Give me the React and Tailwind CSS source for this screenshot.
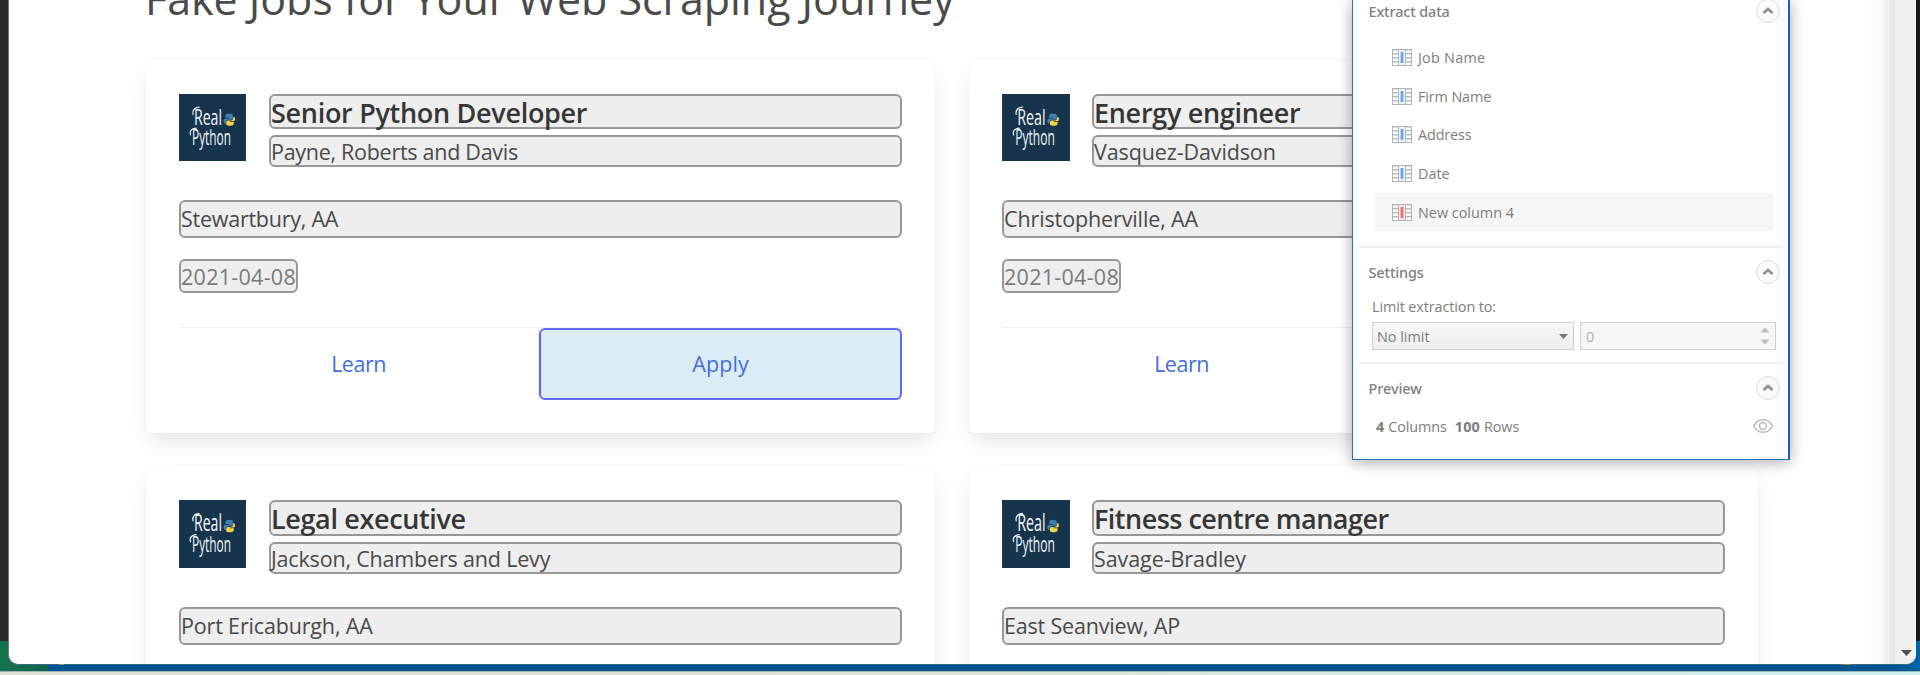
const jobs = [
  {
    title: "Senior Python Developer",
    titleTrack: "tracking-[-0.3px]",
    firm: "Payne, Roberts and Davis",
    firmTrack: "tracking-[-0.28px]",
    place: "Stewartbury, AA",
    placeTrack: "tracking-[-0.25px]",
    applySelected: true,
  },
  {
    title: "Energy engineer",
    titleTrack: "tracking-[-0.3px]",
    firm: "Vasquez-Davidson",
    firmTrack: "tracking-[-0.12px]",
    place: "Christopherville, AA",
    placeTrack: "tracking-[-0.12px]",
    applySelected: true,
  },
  {
    title: "Legal executive",
    titleTrack: "tracking-[-0.36px]",
    firm: "Jackson, Chambers and Levy",
    firmTrack: "tracking-[-0.18px]",
    place: "Port Ericaburgh, AA",
    placeTrack: "tracking-[-0.16px]",
  },
  {
    title: "Fitness centre manager",
    titleTrack: "tracking-[-0.52px]",
    firm: "Savage-Bradley",
    firmTrack: "tracking-[-0.08px]",
    place: "East Seanview, AP",
    placeTrack: "tracking-[-0.18px]",
  },
];

const columns = [
  { name: "Job Name", track: "tracking-[0.25px]" },
  { name: "Firm Name", track: "tracking-[-0.12px]" },
  { name: "Address", track: "tracking-[-0.12px]" },
  { name: "Date", track: "tracking-normal" },
  { name: "New column 4", track: "tracking-normal", active: true },
];

function Logo() {
  return (
    <svg viewBox="0 0 67 67" preserveAspectRatio="none" className="block h-full w-full" role="img">
      <rect width="67" height="67" fill="#16344c" />
      <g fill="#f4f7f9" fontFamily="'Open Sans', 'Liberation Sans', sans-serif">
        <text x="15" y="31" fontSize="22.5" textLength="28" lengthAdjust="spacingAndGlyphs">
          Real
        </text>
        <text x="13" y="51" fontSize="22" textLength="39" lengthAdjust="spacingAndGlyphs">
          Python
        </text>
      </g>
      <g fill="none" stroke="#f4f7f9" strokeWidth="1.2" strokeLinecap="round">
        <path d="M14 20.500C13 16 16 13.500 20 13.200" />
        <path d="M11.500 41C10 37 13 34.500 17 34.200" />
      </g>
      <path
        fill="#3d7fae"
        d="M50 19.500c-2.700 0-3.600 1-3.600 2.500v1.700h4v.7h-4.200c-1.200 0-1.700 1.300-1.600 2.700.1 1.700.8 2.600 2.300 2.600v-1.500c0-1.500 1-2.400 2.400-2.400h2.800c1.300 0 1.900-.8 1.900-1.900v-2c0-1.600-1.400-2.400-4-2.400z"
      />
      <path
        fill="#f8d43f"
        d="M51.200 31.800c2.700 0 3.600-1 3.600-2.500v-1.500h-4v-.7h3.700c1.200 0 1.700-1.300 1.600-2.200-.1-1.300-.6-1.900-1.900-1.900v1.200c0 1.500-1 2.400-2.400 2.400h-2.700c-1.300 0-1.900.8-1.900 1.900v1.200c0 1.500 1.400 2.100 4 2.100z"
      />
    </svg>
  );
}

const box = "rounded-[6px] border-2 border-[#979797] bg-[#eeeeee] whitespace-nowrap";

function JobCard({ job, lower, right }) {
  return (
    <article className="h-[373px] rounded-[5px] bg-white px-[33px] pt-[34px] shadow-[0_11px_22px_-3px_rgba(10,10,10,0.1),0_0_0_1px_rgba(10,10,10,0.02)]">
      <div className={right ? "flex gap-[22px]" : "flex gap-[23px]"}>
        <div className={`shrink-0 ${lower ? "h-[68px]" : "h-[67px]"} ${right ? "w-[68px]" : "w-[67px]"}`}>
          <Logo />
        </div>
        <div className="flex grow flex-col gap-[6px]">
          <h2
            className={`${box} ${lower ? "h-[36px]" : "h-[35px]"} text-[27px] leading-[33px] font-semibold text-[#363636] ${job.titleTrack}`}
          >
            {job.title}
          </h2>
          <h3 className={`${box} h-[32px] text-[21.5px] leading-[30px] text-[#4a4a4a] ${job.firmTrack}`}>
            {job.firm}
          </h3>
        </div>
      </div>
      <p
        className={`${box} mt-[33px] h-[38px] text-[21.5px] leading-[34px] text-[#4a4a4a] ${job.placeTrack}`}
      >
        {job.place}
      </p>
      <div className="mt-[21px] flex">
        <time className={`${box} h-[34px] w-[119px] text-[21.5px] leading-[31px] tracking-[0.28px] text-[#7a7a7a]`}>
          2021-04-08
        </time>
      </div>
      <footer className="mt-[34px] flex border-t border-[#ededed] text-center text-[21.5px] leading-[69px] text-[#3f6fdc]">
        <a className="h-[72px] w-[360px] border-r border-[#ededed] pt-px">
          <span className="tracking-[-0.5px]">Learn</span>
        </a>
        <a
          className={
            job.applySelected
              ? "h-[72px] grow rounded-[6px] border-2 border-[#6464f5] bg-[#dcecf4] leading-[67px]"
              : "h-[72px] grow pt-px"
          }
        >
          <span className="tracking-[0.1px]">Apply</span>
        </a>
      </footer>
    </article>
  );
}

function Collapse() {
  return (
    <span className="flex size-6 shrink-0 items-center justify-center rounded-full border border-[#dcdcdc] bg-[#fafafa]">
      <svg width="12" height="8" viewBox="0 0 12 8">
        <path d="M1.500 6 6 2l4.500 4" fill="none" stroke="#8f8f8f" strokeWidth="2.700" />
      </svg>
    </span>
  );
}

function SectionHead({ children, track }) {
  return (
    <div className="flex h-6 items-center justify-between pr-[8px] pl-[15.5px]">
      <span className={`pt-[2px] font-['Noto_Sans'] text-[14.4px] leading-6 font-medium text-[#808080] ${track}`}>
        {children}
      </span>
      <Collapse />
    </div>
  );
}

function ColumnIcon({ active }) {
  return (
    <svg width="20" height="17" viewBox="0 0 20 17" className="shrink-0" shapeRendering="crispEdges">
      <rect x="0.5" y="0.5" width="19" height="16" fill="#fff" stroke="#aeb4ba" />
      <path d="M1 4.500h18M1 8.500h18M1 12.500h18" stroke="#b6bbc0" />
      <path d="M1 1.500h18M1 5.500h18M1 9.500h18M1 13.500h18" stroke="#dcdfe1" />
      <rect x="7" y="1" width="6" height="15" fill={active ? "#f8e3e4" : "#f0f6fd"} />
      <path d="M6.500 0v17M13.500 0v17" stroke="#aeb4ba" />
      <rect x="8" y="3" width="4" height="11" fill={active ? "#f7b3b7" : "#b5d2f7"} />
      <rect x="9" y="3" width="2" height="11" fill={active ? "#f06a72" : "#6ba5f0"} />
    </svg>
  );
}

function Panel() {
  return (
    <aside className="absolute top-0 left-[1352px] flex h-[460px] w-[438px] flex-col border-r-2 border-b border-l border-r-[#1560b5] border-b-[#1f6fc4] border-l-[#1a72cf] bg-white text-[14.4px] leading-5 text-[#7d7d7d] shadow-[0_2px_14px_rgba(0,0,0,0.34)]">
      <div className="-mt-px">
        <SectionHead track="tracking-[-0.12px]">Extract data</SectionHead>
      </div>
      <ul className="mt-[15px] pr-[15px] pl-[22px]">
        {columns.map((c) => (
          <li
            key={c.name}
            className={`flex items-center gap-[6px] pl-[17px] ${c.active ? "h-[38px] bg-[#f5f5f5]" : "h-[38.8px]"}`}
          >
            <ColumnIcon active={c.active} />
            <span className={`pt-px ${c.track}`}>{c.name}</span>
          </li>
        ))}
      </ul>
      <hr className="mr-[6px] ml-[6px] mt-[15px] h-[2px] border-0 bg-[#eeeeee]" />
      <div className="mt-[12px]">
        <SectionHead track="tracking-[-0.1px]">Settings</SectionHead>
      </div>
      <div className="mt-[13px] pr-[12px] pl-[19px]">
        <div className="h-[20px] leading-[19px] tracking-[-0.1px]">Limit extraction to:</div>
        <div className="mt-[5px] flex gap-[6px]">
          <div className="flex h-[28px] w-[202px] items-center justify-between border border-[#cfcfcf] bg-linear-to-b from-[#f6f6f6] to-[#efefef] pr-[5px] pl-[4px]">
            <span className="pt-px">No limit</span>
            <svg width="9" height="5" viewBox="0 0 9 5">
              <path d="M0 0h9L4.500 5z" fill="#777" />
            </svg>
          </div>
          <div className="flex h-[28px] w-[196px] items-center justify-between border border-[#cfcfcf] bg-[#f6f6f6] pr-[5px] pl-[5px] text-[#b0b0b0]">
            <span className="pt-px">0</span>
            <svg width="10" height="18" viewBox="0 0 10 18">
              <path d="M.5 5.500h9L5 .5zM.5 12.500h9L5 17.500z" fill="#bdbdbd" />
            </svg>
          </div>
        </div>
      </div>
      <hr className="mr-[6px] ml-[6px] mt-[12px] h-[2px] shrink-0 border-0 bg-[#eeeeee]" />
      <div className="mt-[12px]">
        <SectionHead track="tracking-[-0.05px]">Preview</SectionHead>
      </div>
      <div className="mt-[16px] flex h-5 items-center justify-between pr-[15px] pl-[23px]">
        <div className="flex pt-px">
          <b className="font-bold">4</b>
          <span className="ml-[4px] tracking-[-0.1px]">Columns</span>
          <b className="ml-[8px] font-bold tracking-[0.2px]">100</b>
          <span className="ml-[4px] tracking-[-0.1px]">Rows</span>
        </div>
        <svg width="20" height="14" viewBox="0 0 20 14" fill="none" stroke="#b4b8bc" strokeWidth="1.400">
          <path d="M.7 7C2.500 3 6 .7 10 .7S17.500 3 19.300 7C17.500 11 14 13.300 10 13.300S2.500 11 .7 7z" />
          <circle cx="10" cy="7" r="3.500" />
        </svg>
      </div>
    </aside>
  );
}

export default function App() {
  return (
    <div className="relative flex h-[675px] w-[1920px] flex-col overflow-hidden bg-[#2a2a2a] font-['Open_Sans',sans-serif]">
      <div className="absolute inset-y-0 right-0 w-[10px] bg-[#1b1b1b]" />
      <div className="absolute top-[641px] left-0 flex h-[30px] w-full bg-[#005490]">
        <div className="w-[48px] bg-linear-to-r from-[#15734f] to-[#146246]" />
        <div className="grow" />
        <div className="w-[24px] bg-linear-to-r from-[#005490] to-[#0062a8]" />
      </div>
      <div className="absolute top-[671px] left-0 h-[4px] w-full border-t border-[#9fb5b8] bg-linear-to-r from-[#dcdfd6] via-[#dde5d6] to-[#cdf1f2]" />
      <div className="relative ml-[8px] flex h-[665px] w-[1908px] overflow-hidden rounded-b-[10px] border-b border-l border-b-[#2f6a86] border-l-[#777] bg-white">
        <main className="relative w-[1886px] overflow-hidden pl-[137px]">
          <h1 className="-mt-[31px] -ml-px h-[91px] text-[43px] leading-[60px] tracking-[-0.06px] whitespace-nowrap text-[#4a4a4a]">
            Fake Jobs for Your Web Scraping Journey
          </h1>
          <div className="grid w-[1612px] grid-cols-[789px_789px] gap-x-[34px] gap-y-[33px]">
            {jobs.map((job, i) => (
              <JobCard key={job.title} job={job} lower={i > 1} right={i % 2 === 1} />
            ))}
          </div>
          <div className="absolute inset-y-0 right-0 w-[30px] bg-linear-to-r from-white/0 via-black/[0.02] to-black/[0.11]" />
        </main>
        <div className="flex w-[21px] flex-col items-center justify-end bg-[#f0f0f0] pb-[8px] pl-[2px]">
          <svg width="11" height="6" viewBox="0 0 11 6">
            <path d="M0 0h11L5.500 6z" fill="#505050" />
          </svg>
        </div>
      </div>
      <div className="absolute top-[664px] left-[59px] h-px w-[5px] bg-[#8f927f]" />
      <div className="absolute top-[664px] left-[1842px] h-px w-[9px] bg-[#9a8742]" />
      <Panel />
    </div>
  );
}
